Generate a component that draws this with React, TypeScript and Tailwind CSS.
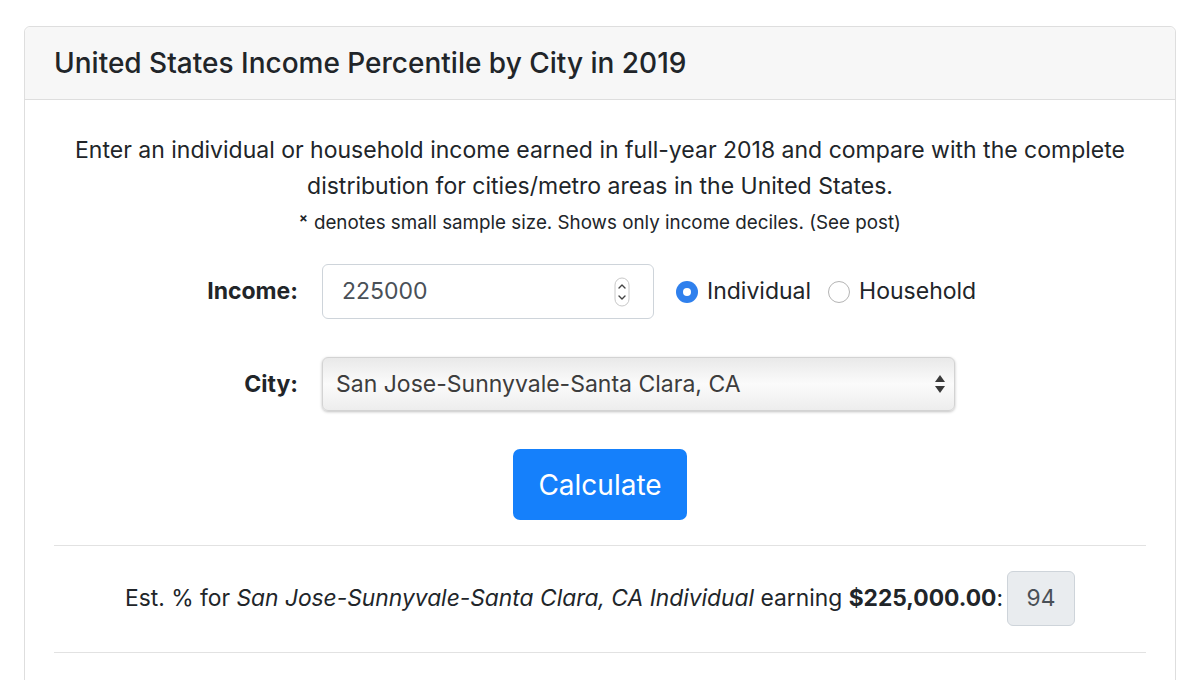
import React from "react";

const font = { fontFamily: "Inter, 'Liberation Sans', Arial, sans-serif" };

export default function App() {
  return (
    <div className="w-[1200px] h-[680px] overflow-hidden bg-white pt-[26px] px-[24px] text-[#212529]" style={font}>
      <div className="border border-[#dedede] rounded-[6px] h-[700px] flex flex-col">
        <div className="h-[73px] shrink-0 bg-[#f7f7f7] border-b border-[#dedede] rounded-t-[6px] pl-[29px] flex items-center">
          <h5 className="text-[28px] font-medium leading-none">United States Income Percentile by City in 2019</h5>
        </div>
        <div className="px-[29px] flex flex-col">
          <p className="mt-[32px] text-center text-[23px] leading-[36px]">
            Enter an individual or household income earned in full-year 2018 and compare with the complete
            <br />
            distribution for cities/metro areas in the United States.
          </p>
          <p className="mt-[6px] text-center text-[18.8px] leading-[26px]">
            <sup className="text-[13px] font-bold mr-[6px] relative top-[-6px]">×</sup>denotes small sample size. Shows only income deciles. (See post)
          </p>

          <div className="mt-[28px] flex items-center h-[55px]">
            <label className="w-[244px] text-right text-[23px] font-bold">Income:</label>
            <div className="ml-[24px] w-[332px] h-[55px] border border-[#ced4da] rounded-[6px] flex items-center pl-[19px] pr-[23px] text-[23px] text-[#495057]">
              <span className="flex-1">225000</span>
              <svg width="16" height="30" viewBox="0 0 16 30">
                <rect x="1" y="1" width="14" height="28" rx="7" fill="#fff" stroke="#c8c8c8" />
                <path d="M5 11 L8 8 L11 11" fill="none" stroke="#444" strokeWidth="1.4" strokeLinecap="round" strokeLinejoin="round" />
                <path d="M5 19 L8 22 L11 19" fill="none" stroke="#444" strokeWidth="1.4" strokeLinecap="round" strokeLinejoin="round" />
              </svg>
            </div>
            <div className="ml-[22px] flex items-center">
              <span className="w-[22px] h-[22px] rounded-full bg-[#2f80ed] flex items-center justify-center">
                <span className="w-[8px] h-[8px] rounded-full bg-white" />
              </span>
              <span className="ml-[9px] text-[23px]">Individual</span>
            </div>
            <div className="ml-[17px] flex items-center">
              <span className="w-[22px] h-[22px] rounded-full bg-white border border-[#b4b4b4]" />
              <span className="ml-[9px] text-[23px]">Household</span>
            </div>
          </div>

          <div className="mt-[38px] flex items-center h-[54px]">
            <label className="w-[244px] text-right text-[23px] font-bold">City:</label>
            <div className="ml-[24px] w-[633px] h-[54px] rounded-[6px] border border-[#d3d3d3] bg-gradient-to-b from-[#e9e9e9] via-[#fbfbfb] to-[#ededed] shadow-[0_1px_3px_rgba(0,0,0,0.25)] flex items-center pl-[13px] pr-[8px] text-[23px] text-[#3d3d3d]">
              <span className="flex-1">San Jose-Sunnyvale-Santa Clara, CA</span>
              <svg width="12" height="24" viewBox="0 0 12 24">
                <path d="M1 10 L6 3 L11 10 Z" fill="#3a3a3a" />
                <path d="M1 14 L6 21 L11 14 Z" fill="#3a3a3a" />
              </svg>
            </div>
          </div>

          <div className="mt-[38px] flex justify-center">
            <button className="w-[174px] h-[71px] rounded-[7px] bg-[#1580fb] text-white text-[28px]">Calculate</button>
          </div>

          <div className="mt-[25px] border-t border-[#e2e2e2]" />

          <div className="mt-[25px] flex items-center justify-center h-[55px] text-[22.8px]">
            <span>
              Est. % for <i>San Jose-Sunnyvale-Santa Clara, CA Individual</i> earning <b>$225,000.00</b>:
            </span>
            <span className="ml-[4px] w-[68px] h-[55px] bg-[#e9ecef] border border-[#ced4da] rounded-[6px] flex items-center justify-center text-[#495057]">94</span>
          </div>

          <div className="mt-[26px] border-t border-[#e2e2e2]" />
        </div>
      </div>
    </div>
  );
}
